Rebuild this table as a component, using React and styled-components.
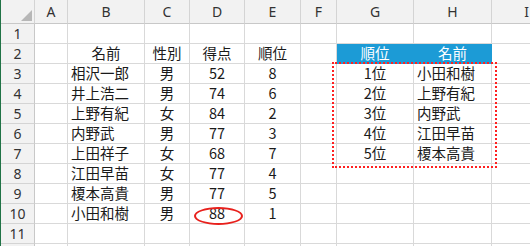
import React from "react";
import styled, { createGlobalStyle } from "styled-components";

const GlobalStyle = createGlobalStyle`
  html, body {
    margin: 0;
    padding: 0;
    background: #ffffff;
  }
  body {
    font-family: "Noto Sans CJK JP", "Noto Sans", sans-serif;
  }
`;

const COLS = [
  { key: "", width: 34 },
  { key: "A", width: 33 },
  { key: "B", width: 77 },
  { key: "C", width: 45 },
  { key: "D", width: 55 },
  { key: "E", width: 56 },
  { key: "F", width: 36 },
  { key: "G", width: 77 },
  { key: "H", width: 78 },
  { key: "I", width: 70 },
];

const students = [
  ["相沢一郎", "男", "52", "8"],
  ["井上浩二", "男", "74", "6"],
  ["上野有紀", "女", "84", "2"],
  ["内野武", "男", "77", "3"],
  ["上田祥子", "女", "68", "7"],
  ["江田早苗", "女", "77", "4"],
  ["榎本高貴", "男", "77", "5"],
  ["小田和樹", "男", "88", "1"],
];

const ranking = [
  ["1位", "小田和樹"],
  ["2位", "上野有紀"],
  ["3位", "内野武"],
  ["4位", "江田早苗"],
  ["5位", "榎本高貴"],
];

const Sheet = styled.div`
  position: relative;
  width: 530px;
  height: 246px;
  overflow: hidden;
  border-left: 1px solid #217346;
  box-sizing: border-box;
  display: grid;
  grid-template-columns: ${COLS.map((c) => c.width + "px").join(" ")};
  grid-template-rows: 24px repeat(12, 20px);
  color: #1a1a1a;
  font-size: 14.5px;
`;

const Cell = styled.div`
  box-sizing: border-box;
  border-right: 1px solid ${(p) => (p.$head ? "#1c9bd6" : "#d9d9d9")};
  border-bottom: 1px solid ${(p) => (p.$head ? "#1c9bd6" : "#d9d9d9")};
  display: flex;
  align-items: center;
  justify-content: ${(p) => (p.$align === "left" ? "flex-start" : "center")};
  padding-left: ${(p) => (p.$align === "left" ? "3px" : "0")};
  white-space: nowrap;
  line-height: 1;
  background: ${(p) => (p.$head ? "#1c9bd6" : "transparent")};
  color: ${(p) => (p.$head ? "#ffffff" : "inherit")};
`;

const ColHeader = styled.div`
  box-sizing: border-box;
  background: #f2f2f2;
  border-right: 1px solid #d4d4d4;
  border-bottom: 1px solid #c8c8c8;
  display: flex;
  align-items: center;
  justify-content: center;
  font-family: "Noto Sans", "Liberation Sans", sans-serif;
  font-size: 14px;
  color: #333333;
  position: relative;
`;

const RowHeader = styled.div`
  box-sizing: border-box;
  background: #f2f2f2;
  border-right: 1px solid #c8c8c8;
  border-bottom: 1px solid #d4d4d4;
  display: flex;
  align-items: center;
  justify-content: center;
  font-family: "Noto Sans", "Liberation Sans", sans-serif;
  font-size: 14px;
  color: #333333;
`;

const CornerMark = styled.span`
  position: absolute;
  right: 2px;
  bottom: 2px;
  width: 11px;
  height: 11px;
  background: #b7b7b7;
  clip-path: polygon(100% 0, 100% 100%, 0 100%);
`;

const DottedBox = styled.div`
  position: absolute;
  left: 331px;
  top: 62px;
  width: 165px;
  height: 106px;
  border: 2px dotted #ff2020;
  box-sizing: border-box;
  pointer-events: none;
`;

const Ellipse = styled.div`
  position: absolute;
  left: 193px;
  top: 207px;
  width: 49px;
  height: 18px;
  border: 2px solid #e8201c;
  border-radius: 50%;
  box-sizing: border-box;
  pointer-events: none;
`;

const buildRow = (r) => {
  const cells = Array(9).fill(null).map(() => ({ text: "" }));
  // cells index: 0=A ... 8=I
  if (r === 2) {
    cells[1] = { text: "名前" };
    cells[2] = { text: "性別" };
    cells[3] = { text: "得点" };
    cells[4] = { text: "順位" };
    cells[6] = { text: "順位", head: true };
    cells[7] = { text: "名前", head: true };
  }
  const s = students[r - 3];
  if (s) {
    cells[1] = { text: s[0], align: "left" };
    cells[2] = { text: s[1] };
    cells[3] = { text: s[2] };
    cells[4] = { text: s[3] };
  }
  const k = ranking[r - 3];
  if (k) {
    cells[6] = { text: k[0] };
    cells[7] = { text: k[1], align: "left" };
  }
  return cells;
};

export default function App() {
  const rows = Array.from({ length: 12 }, (_, i) => i + 1);
  return (
    <>
      <GlobalStyle />
      <Sheet>
        {COLS.map((c, i) => (
          <ColHeader key={"h" + i}>
            {c.key}
            {i === 0 && <CornerMark />}
          </ColHeader>
        ))}
        {rows.map((r) => (
          <React.Fragment key={r}>
            <RowHeader>{r < 12 ? r : ""}</RowHeader>
            {buildRow(r).map((c, j) => (
              <Cell key={j} $align={c.align} $head={c.head}>
                {c.text}
              </Cell>
            ))}
          </React.Fragment>
        ))}
        <DottedBox />
        <Ellipse />
      </Sheet>
    </>
  );
}
